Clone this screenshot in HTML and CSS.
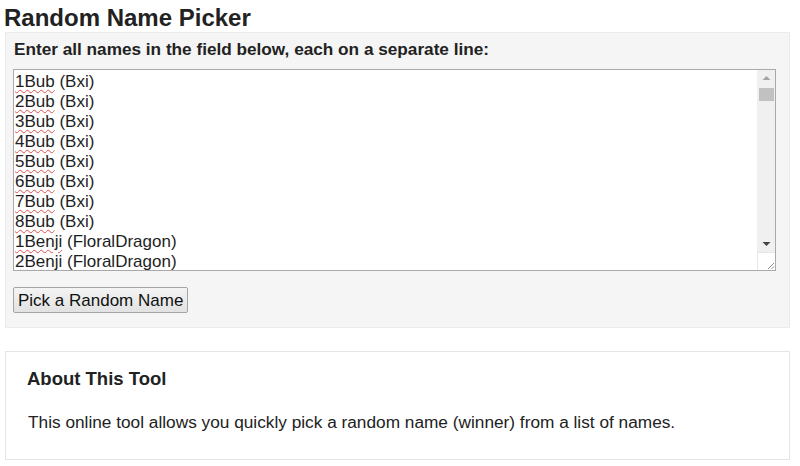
FILE: index.html
```html
<!DOCTYPE html>
<html lang="en">
<head>
<meta charset="utf-8">
<title>Random Name Picker</title>
<link rel="stylesheet" href="styles.css">
</head>
<body>
<div class="page">
  <h1 class="title">Random Name Picker</h1>
  <div class="picker">
    <label class="picker-label" for="names">Enter all names in the field below, each on a separate line:</label>
    <div class="field">
      <textarea id="names" class="names" spellcheck="false">1Bub (Bxi)
2Bub (Bxi)
3Bub (Bxi)
4Bub (Bxi)
5Bub (Bxi)
6Bub (Bxi)
7Bub (Bxi)
8Bub (Bxi)
1Benji (FloralDragon)
2Benji (FloralDragon)
3Benji (FloralDragon)
4Benji (FloralDragon)
5Benji (FloralDragon)
6Benji (FloralDragon)
7Benji (FloralDragon)
8Benji (FloralDragon)</textarea>
      <div class="spell" aria-hidden="true">
        <div><span class="miss">1Bub</span> (Bxi)</div>
        <div><span class="miss">2Bub</span> (Bxi)</div>
        <div><span class="miss">3Bub</span> (Bxi)</div>
        <div><span class="miss">4Bub</span> (Bxi)</div>
        <div><span class="miss">5Bub</span> (Bxi)</div>
        <div><span class="miss">6Bub</span> (Bxi)</div>
        <div><span class="miss">7Bub</span> (Bxi)</div>
        <div><span class="miss">8Bub</span> (Bxi)</div>
        <div><span class="miss">1Benji</span> (FloralDragon)</div>
        <div><span class="miss">2Benji</span> (FloralDragon)</div>
      </div>
      <div class="vscroll" aria-hidden="true">
        <div class="vscroll-btn">
          <svg width="17" height="17" viewBox="0 0 17 17"><polygon points="4.5,10 12.5,10 8.5,6" fill="#a3a3a3"/></svg>
        </div>
        <div class="vscroll-track"><div class="vscroll-thumb"></div></div>
        <div class="vscroll-btn">
          <svg width="17" height="17" viewBox="0 0 17 17"><polygon points="4.5,7 12.5,7 8.5,11" fill="#444444"/></svg>
        </div>
        <div class="vscroll-corner">
          <svg width="17" height="18" viewBox="0 0 17 18"><path d="M16 11 L10 17 M16 14.5 L13.5 17" stroke="#8f8f8f" stroke-width="1"/></svg>
        </div>
      </div>
    </div>
    <button class="pick-btn" type="button">Pick a Random Name</button>
  </div>
  <div class="about">
    <h2 class="about-title">About This Tool</h2>
    <p class="about-text">This online tool allows you quickly pick a random name (winner) from a list of names.</p>
  </div>
</div>
</body>
</html>
```

FILE: styles.css
```css
html, body {
  margin: 0;
  padding: 0;
  background: #ffffff;
}

body {
  font-family: "Liberation Sans", Arial, sans-serif;
  color: #222222;
}

.page {
  margin: 0 10px 0 5px;
}

.title {
  margin: 3px 0 0 -1px;
  font-size: 24px;
  line-height: 29px;
  font-weight: bold;
  color: #222222;
}

.picker {
  background: #f5f5f5;
  border: 1px solid #ebebeb;
  padding: 6px 13px 14px 7px;
  display: flex;
  flex-direction: column;
  align-items: flex-start;
}

.picker-label {
  font-size: 17.2px;
  line-height: 20px;
  font-weight: bold;
  color: #222222;
  padding-left: 1px;
}

.field {
  position: relative;
  width: 100%;
  margin-top: 10px;
}

.names {
  box-sizing: border-box;
  display: block;
  width: 100%;
  height: 202px;
  margin: 0;
  padding: 2px 19px 0 1px;
  border: 1px solid #a9a9a9;
  border-radius: 0;
  background: #ffffff;
  font-family: "Liberation Sans", Arial, sans-serif;
  font-size: 17px;
  line-height: 20px;
  color: #1e1e1e;
  resize: none;
  overflow: hidden;
  outline: none;
}

.spell {
  position: absolute;
  top: 3px;
  left: 2px;
  right: 20px;
  bottom: 1px;
  overflow: hidden;
  font-family: "Liberation Sans", Arial, sans-serif;
  font-size: 17px;
  line-height: 20px;
  color: transparent;
  pointer-events: none;
  white-space: nowrap;
}

.miss {
  text-decoration-line: underline;
  text-decoration-style: wavy;
  text-decoration-color: #e25050;
  text-decoration-thickness: 1px;
  text-underline-offset: 2px;
}

.vscroll {
  position: absolute;
  top: 1px;
  right: 1px;
  bottom: 1px;
  width: 18px;
  display: flex;
  flex-direction: column;
  background: #f0f0f0;
}

.vscroll-btn {
  height: 17px;
  flex: none;
  display: flex;
  justify-content: center;
}

.vscroll-track {
  flex: 1;
  padding-top: 1px;
}

.vscroll-thumb {
  width: 15px;
  height: 13px;
  margin: 0 auto;
  background: #c1c1c1;
}

.vscroll-corner {
  height: 18px;
  flex: none;
  background: #ffffff;
  border-top: 1px solid #e6e6e6;
  border-left: 1px solid #e6e6e6;
  box-sizing: border-box;
  display: flex;
  justify-content: flex-end;
  align-items: flex-end;
}

.vscroll-corner svg {
  display: block;
}

.pick-btn {
  margin-top: 16px;
  padding: 3px 4px 2px 4px;
  font-family: "Liberation Sans", Arial, sans-serif;
  font-size: 17px;
  line-height: 19px;
  color: #111111;
  background: linear-gradient(#f4f4f4, #e2e2e2);
  border: 1px solid #a5a5a5;
  border-radius: 2px;
}

.about {
  margin-top: 23px;
  border: 1px solid #e5e5e5;
  background: #ffffff;
  padding: 16px 21px 27px;
}

.about-title {
  margin: 0;
  font-size: 18.5px;
  line-height: 22px;
  font-weight: bold;
  color: #222222;
}

.about-text {
  margin: 22px 0 0 1px;
  font-size: 17.25px;
  line-height: 20px;
  color: #222222;
}
```
